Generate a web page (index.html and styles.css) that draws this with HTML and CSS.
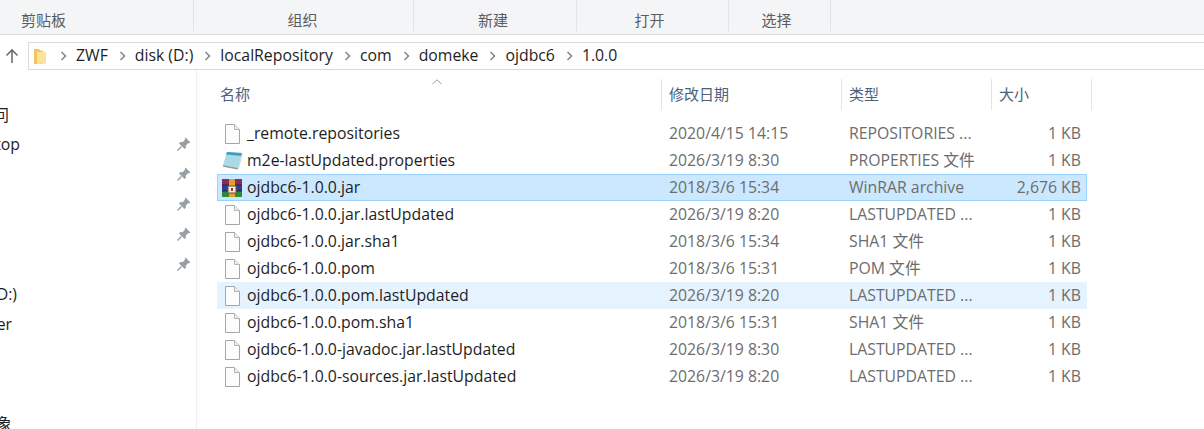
FILE: index.html
```html
<!DOCTYPE html>
<html lang="zh">
<head>
<meta charset="utf-8">
<title>1.0.0</title>
<link rel="stylesheet" href="styles.css">
</head>
<body>
<svg class="defs" width="0" height="0" aria-hidden="true">
  <symbol id="doc" viewBox="0 0 16 20">
    <path d="M1.5 .5H10.5L15.5 5.5V19.5H1.5Z" fill="#fdfdfd" stroke="#a6a6a6"/>
    <path d="M10.5 .5V5.5H15.5" fill="#eeeeee" stroke="#b4b4b4"/>
  </symbol>
  <symbol id="pin" viewBox="0 0 14 14">
    <path d="M8.6 .6L13.4 5.4L12.4 6.2L11.4 5.9L8.8 8.4L8.9 10.8L7.6 12L2 6.4L3.2 5.1L5.6 5.2L8.1 2.6L7.8 1.6Z" fill="#98a0a6"/>
    <path d="M4.4 9.6L.5 13.5" stroke="#98a0a6" stroke-width="1.4"/>
  </symbol>
  <symbol id="chev" viewBox="0 0 7 10">
    <path d="M1.5 1L5.5 5L1.5 9" fill="none" stroke="#8a8a8a" stroke-width="1.6"/>
  </symbol>
</svg>

<header class="ribbon">
  <div class="group g1">剪贴板</div>
  <div class="group g2">组织</div>
  <div class="group g3">新建</div>
  <div class="group g4">打开</div>
  <div class="group g5">选择</div>
</header>

<div class="addressrow">
  <svg class="up" width="14" height="16" viewBox="0 0 14 16"><path d="M7 15V2M1.5 7.5L7 2L12.5 7.5" fill="none" stroke="#6f6f6f" stroke-width="1.6"/></svg>
  <nav class="address">
    <svg class="folder" width="13" height="17" viewBox="0 0 13 17">
      <path d="M0 1H5L6.5 2.5H9V16H0Z" fill="#f2c65a"/>
      <path d="M3 4H12V15.5L3 16Z" fill="#fbe39a"/>
    </svg>
    <svg class="chev first"><use href="#chev"/></svg><span>ZWF</span>
    <svg class="chev"><use href="#chev"/></svg><span>disk (D:)</span>
    <svg class="chev"><use href="#chev"/></svg><span>localRepository</span>
    <svg class="chev"><use href="#chev"/></svg><span>com</span>
    <svg class="chev"><use href="#chev"/></svg><span>domeke</span>
    <svg class="chev"><use href="#chev"/></svg><span>ojdbc6</span>
    <svg class="chev"><use href="#chev"/></svg><span>1.0.0</span>
  </nav>
</div>

<main class="body">
  <aside class="sidebar">
    <div class="navitem"><div class="navclip e9"><span class="navtext">快速访问</span></div></div>
    <div class="navitem"><div class="navclip e20"><span class="navtext">Desktop</span></div><svg class="pin"><use href="#pin"/></svg></div>
    <div class="navitem"><svg class="pin"><use href="#pin"/></svg></div>
    <div class="navitem"><svg class="pin"><use href="#pin"/></svg></div>
    <div class="navitem"><svg class="pin"><use href="#pin"/></svg></div>
    <div class="navitem"><svg class="pin"><use href="#pin"/></svg></div>
    <div class="navitem"><div class="navclip e17"><span class="navtext">disk (D:)</span></div></div>
    <div class="navitem"><div class="navclip e12"><span class="navtext">Thunder</span></div></div>
    <div class="navitem"></div>
    <div class="navitem"></div>
    <div class="navitem last"><div class="navclip e12"><span class="navtext">3D 对象</span></div></div>
  </aside>

  <section class="list">
    <div class="head">
      <div class="hcell hname">名称<svg class="caret" width="10" height="6" viewBox="0 0 10 6"><path d="M.5 5L5 .8L9.5 5" fill="none" stroke="#9a9a9a"/></svg></div>
      <div class="hcell hdate">修改日期</div>
      <div class="hcell htype">类型</div>
      <div class="hcell hsize">大小</div>
    </div>
    <div class="rows">
      <div class="row"><svg class="doc"><use href="#doc"/></svg><span class="name">_remote.repositories</span><span class="meta">2020/4/15 14:15</span><span class="meta">REPOSITORIES ...</span><span class="meta size">1 KB</span></div>
      <div class="row">
        <svg class="ficon" width="22" height="20" viewBox="0 0 22 20">
          <path d="M6 1L21 2L17 17L2 14Z" fill="#a8dbe6"/>
          <path d="M6 1L21 2L20.3 5L5 3.6Z" fill="#3f9dbd"/>
          <path d="M2 14L17 17L16.6 18.6L2.2 15.8Z" fill="#8d9aa0"/>
          <path d="M17 17L21 2L21.6 3L17.8 18Z" fill="#c9d2d6"/>
        </svg>
        <span class="name">m2e-lastUpdated.properties</span><span class="meta">2026/3/19 8:30</span><span class="meta">PROPERTIES 文件</span><span class="meta size">1 KB</span></div>
      <div class="row selected">
        <svg class="ficon" width="22" height="20" viewBox="0 0 22 20">
          <rect x="1" y="1" width="20" height="6" fill="#8e2a62"/>
          <rect x="1" y="7" width="20" height="6" fill="#2a3f96"/>
          <rect x="1" y="13" width="20" height="6" fill="#2f8a3c"/>
          <rect x="1" y="6.5" width="20" height="1" fill="#2b2233"/>
          <rect x="1" y="12.5" width="20" height="1" fill="#222a33"/>
          <rect x="8" y="1" width="6" height="18" fill="#e0a030"/>
          <rect x="7" y="8" width="8" height="7" fill="#f1ece0" stroke="#6b5a30"/>
          <rect x="10" y="10" width="2" height="3" fill="#a33"/>
        </svg>
        <span class="name">ojdbc6-1.0.0.jar</span><span class="meta">2018/3/6 15:34</span><span class="meta">WinRAR archive</span><span class="meta size">2,676 KB</span></div>
      <div class="row"><svg class="doc"><use href="#doc"/></svg><span class="name">ojdbc6-1.0.0.jar.lastUpdated</span><span class="meta">2026/3/19 8:20</span><span class="meta">LASTUPDATED ...</span><span class="meta size">1 KB</span></div>
      <div class="row"><svg class="doc"><use href="#doc"/></svg><span class="name">ojdbc6-1.0.0.jar.sha1</span><span class="meta">2018/3/6 15:34</span><span class="meta">SHA1 文件</span><span class="meta size">1 KB</span></div>
      <div class="row"><svg class="doc"><use href="#doc"/></svg><span class="name">ojdbc6-1.0.0.pom</span><span class="meta">2018/3/6 15:31</span><span class="meta">POM 文件</span><span class="meta size">1 KB</span></div>
      <div class="row hover"><svg class="doc"><use href="#doc"/></svg><span class="name">ojdbc6-1.0.0.pom.lastUpdated</span><span class="meta">2026/3/19 8:20</span><span class="meta">LASTUPDATED ...</span><span class="meta size">1 KB</span></div>
      <div class="row"><svg class="doc"><use href="#doc"/></svg><span class="name">ojdbc6-1.0.0.pom.sha1</span><span class="meta">2018/3/6 15:31</span><span class="meta">SHA1 文件</span><span class="meta size">1 KB</span></div>
      <div class="row"><svg class="doc"><use href="#doc"/></svg><span class="name">ojdbc6-1.0.0-javadoc.jar.lastUpdated</span><span class="meta">2026/3/19 8:30</span><span class="meta">LASTUPDATED ...</span><span class="meta size">1 KB</span></div>
      <div class="row"><svg class="doc"><use href="#doc"/></svg><span class="name">ojdbc6-1.0.0-sources.jar.lastUpdated</span><span class="meta">2026/3/19 8:20</span><span class="meta">LASTUPDATED ...</span><span class="meta size">1 KB</span></div>
    </div>
  </section>
</main>
</body>
</html>
```

FILE: styles.css
```css
* { box-sizing: border-box; }
html, body { margin: 0; height: 100%; }
body {
  width: 1204px;
  height: 429px;
  overflow: hidden;
  background: #fff;
  font-family: "Open Sans", "Noto Sans CJK SC", sans-serif;
  font-size: 15.8px;
  color: #1e1e1e;
}
.defs { position: absolute; }

.ribbon {
  display: flex;
  height: 35px;
  background: #f4f5f7;
  border-bottom: 1px solid #dadbdc;
  padding-bottom: 3px;
}
.group {
  display: flex;
  align-items: flex-end;
  justify-content: center;
  border-right: 1px solid #e2e3e5;
  color: #5c5c5c;
  font-size: 15px;
  line-height: 22px;
  padding-right: 3px;
}
.g1 { width: 194px; justify-content: flex-start; padding-left: 21px; }
.g2 { width: 220px; padding-right: 2px; }
.g3 { width: 163px; padding-right: 4px; }
.g4 { width: 152px; padding-right: 6px; }
.g5 { width: 102px; padding-right: 6px; }

.addressrow {
  display: flex;
  align-items: center;
  height: 28px;
  margin-top: 7px;
}
.up { margin: 0 9px 0 5px; flex: none; }
.address {
  flex: 1;
  display: flex;
  align-items: center;
  height: 28px;
  border: 1px solid #d9d9d9;
  border-right: 0;
  padding-left: 5px;
  padding-bottom: 2px;
  white-space: nowrap;
}
.folder { flex: none; margin-top: 2px; }
.chev { width: 7px; height: 10px; margin: 2px 9px 0 11px; flex: none; }
.chev.first { margin-left: 13px; }

.body {
  display: flex;
  height: 359px;
}
.sidebar {
  width: 197px;
  flex: none;
  border-right: 1px solid #f0f0f0;
  padding-top: 29px;
}
.navitem {
  position: relative;
  height: 30px;
  display: flex;
  align-items: center;
}
.navitem.last { margin-top: 9px; }
.navclip {
  display: flex;
  justify-content: flex-end;
  overflow: hidden;
}
.e9 { width: 9px; }
.e12 { width: 12px; }
.e17 { width: 17px; }
.e20 { width: 20px; }
.navtext { white-space: nowrap; flex: none; }
.pin {
  position: absolute;
  left: 177px;
  top: 8px;
  width: 14px;
  height: 14px;
}

.list { flex: 1; padding-left: 20px; min-width: 0; }
.head {
  display: flex;
  height: 31px;
  margin-top: 9px;
  color: #4c607a;
  font-size: 15px;
}
.hcell {
  position: relative;
  display: flex;
  align-items: center;
  padding-left: 3px;
  padding-bottom: 2px;
  border-right: 1px solid #e5e5e5;
}
.hname { width: 445px; }
.hdate { width: 180px; padding-left: 7px; }
.htype { width: 150px; padding-left: 7px; }
.hsize { width: 100px; padding-left: 7px; }
.caret { position: absolute; left: 215px; top: 0; }

.rows { margin-top: 10px; width: 870px; }
.row {
  display: grid;
  grid-template-columns: 29px 422px 180px 150px 82px;
  align-items: center;
  height: 27px;
  border: 1px solid transparent;
  line-height: 25px;
  white-space: nowrap;
}
.row.selected { background: #cce8ff; border-color: #99d1ff; }
.row.hover { background: #e5f3ff; border-color: #e5f3ff; }
.doc { width: 16px; height: 20px; margin-left: 6px; display: block; }
.ficon { margin-left: 3px; display: block; }
.name { color: #1e1e1e; }
.meta { color: #6d6d6d; overflow: hidden; }
.size { text-align: right; }
```
